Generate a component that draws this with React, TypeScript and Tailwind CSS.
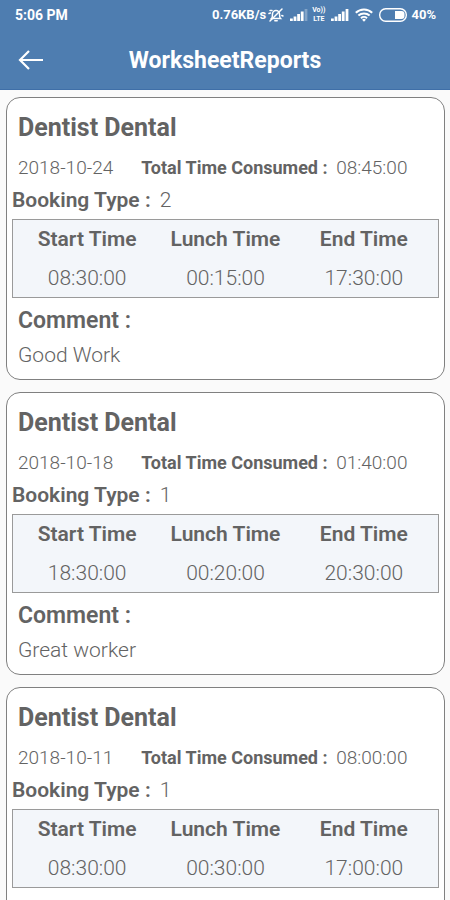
type Report = {
  id: number;
  client: string;
  date: string;
  total: string;
  bookingType: number;
  start: string;
  lunch: string;
  end: string;
  comment?: string;
};

const reports: Report[] = [
  {
    id: 1,
    client: "Dentist Dental",
    date: "2018-10-24",
    total: "08:45:00",
    bookingType: 2,
    start: "08:30:00",
    lunch: "00:15:00",
    end: "17:30:00",
    comment: "Good Work",
  },
  {
    id: 2,
    client: "Dentist Dental",
    date: "2018-10-18",
    total: "01:40:00",
    bookingType: 1,
    start: "18:30:00",
    lunch: "00:20:00",
    end: "20:30:00",
    comment: "Great worker",
  },
  {
    id: 3,
    client: "Dentist Dental",
    date: "2018-10-11",
    total: "08:00:00",
    bookingType: 1,
    start: "08:30:00",
    lunch: "00:30:00",
    end: "17:00:00",
  },
];

function MutedBellIcon() {
  return (
    <svg className="h-4 w-4" viewBox="0 0 16 16" fill="none" stroke="currentColor" strokeWidth="1.5" strokeLinecap="round">
      <path d="M3.5 11.5c1-1 1-2.2 1-4.5a3.5 3.5 0 0 1 7 0c0 2.3 0 3.5 1 4.5z" />
      <path d="M6.8 13.8h2.400M14 2L2 14M1 6.500l1.500-.5M13.800 8.500l1.200.5M2 3.500h2" />
    </svg>
  );
}

function SignalIcon({ weak = false }: { weak?: boolean }) {
  return (
    <svg className="h-3 w-[18px]" viewBox="0 0 18 12" fill="currentColor">
      <rect x="0" y="9.5" width="2.8" height="2.5" />
      <rect x="3.6" y="7.5" width="2.8" height="4.5" />
      <rect x="7.2" y="5" width="2.8" height="7" />
      <rect x="10.8" y="2.5" width="2.8" height="9.5" />
      <rect x="14.6" y="0" width="2.8" height="12" opacity={weak ? 0.3 : 1} />
    </svg>
  );
}

function WifiIcon() {
  return (
    <svg className="h-[14px] w-[18px]" viewBox="0 0 18 14" fill="none" stroke="currentColor" strokeWidth="2">
      <path d="M.8 4.8a12 12 0 0 1 16.4 0" />
      <path d="M3.4 7.6a8.2 8.2 0 0 1 11.2 0" />
      <path d="M6 10.2a4.4 4.4 0 0 1 6 0" />
      <path d="M9 13.7L7.1 11.7a2.8 2.8 0 0 1 3.8 0z" fill="currentColor" stroke="none" />
    </svg>
  );
}

function BatteryIcon() {
  return (
    <svg className="h-[14px] w-7" viewBox="0 0 28 14" fill="none">
      <rect x="0.7" y="0.7" width="26.6" height="12.6" rx="6" stroke="currentColor" strokeWidth="1.4" />
      <path d="M16 3h6.5a3 3 0 0 1 3 3v2a3 3 0 0 1-3 3H16z" fill="currentColor" />
    </svg>
  );
}

function StatusBar() {
  return (
    <div className="flex h-[30px] items-center justify-between pr-[14px] pl-[15px] text-[14px] font-bold">
      <span>5:06 PM</span>
      <div className="flex items-center">
        <span className="text-[13px]">0.76KB/s</span>
        <span className="ml-0.5"><MutedBellIcon /></span>
        <span className="ml-1.5"><SignalIcon weak /></span>
        <span className="ml-1 flex flex-col items-center text-[7px] leading-[9px]">
          <span>Vo))</span>
          <span>LTE</span>
        </span>
        <span className="ml-1.5"><SignalIcon /></span>
        <span className="ml-1.5"><WifiIcon /></span>
        <span className="ml-1.5"><BatteryIcon /></span>
        <span className="ml-1 text-[13px]">40%</span>
      </div>
    </div>
  );
}

function ReportCard({ report }: { report: Report }) {
  return (
    <article className="min-h-[283px] rounded-[14px] border border-[#808080] bg-white px-[5px] pt-[11px] pb-2">
      <h2 className="px-1.5 text-[25px] leading-[38px] font-bold">{report.client}</h2>
      <div className="mt-[9px] flex gap-7 px-1.5 text-[19px] leading-6 font-light">
        <span>{report.date}</span>
        <span>
          <span className="mr-1 text-[18px] font-bold">Total Time Consumed :</span> {report.total}
        </span>
      </div>
      <p className="mt-1 text-[21px] leading-8 font-light">
        <span className="mr-1 font-semibold">Booking Type :</span> {report.bookingType}
      </p>
      <div className="mt-[3px] border border-[#9a9a9a] bg-[#f3f6fa] px-[5px]">
        <table className="w-full table-fixed text-center text-[21px]">
          <thead>
            <tr className="h-10">
              <th className="p-0 font-semibold">Start Time</th>
              <th className="p-0 font-semibold">Lunch Time</th>
              <th className="p-0 font-semibold">End Time</th>
            </tr>
          </thead>
          <tbody>
            <tr className="h-[37px] font-light">
              <td className="p-0">{report.start}</td>
              <td className="p-0">{report.lunch}</td>
              <td className="p-0">{report.end}</td>
            </tr>
          </tbody>
        </table>
      </div>
      {report.comment && (
        <>
          <h3 className="mt-[7px] px-1.5 text-[23px] leading-8 font-semibold">Comment :</h3>
          <p className="mt-0.5 px-1.5 text-[21px] leading-8 font-light">{report.comment}</p>
        </>
      )}
    </article>
  );
}

export default function App() {
  return (
    <div className="flex h-screen flex-col bg-[#fafafa] font-[Roboto,sans-serif] text-[#636363]">
      <header className="shrink-0 border-b border-[#3f6fa8] bg-[#4e7db0] text-white">
        <StatusBar />
        <div className="grid h-[59px] grid-cols-[48px_1fr_48px] items-center">
          <button type="button" aria-label="Back" className="pl-[18px]">
            <svg className="h-5 w-[26px]" viewBox="0 0 26 20" fill="none" stroke="currentColor" strokeWidth="2.2">
              <path d="M25 10H2M11 1L2 10l9 9" />
            </svg>
          </button>
          <h1 className="pt-1 text-center text-[23px] font-bold">WorksheetReports</h1>
        </div>
      </header>
      <main className="flex min-h-0 flex-1 flex-col gap-3 overflow-y-auto pt-[7px] pr-[5px] pb-3 pl-1.5 [scrollbar-width:none] *:shrink-0">
        {reports.map((report) => (
          <ReportCard key={report.id} report={report} />
        ))}
      </main>
    </div>
  );
}
